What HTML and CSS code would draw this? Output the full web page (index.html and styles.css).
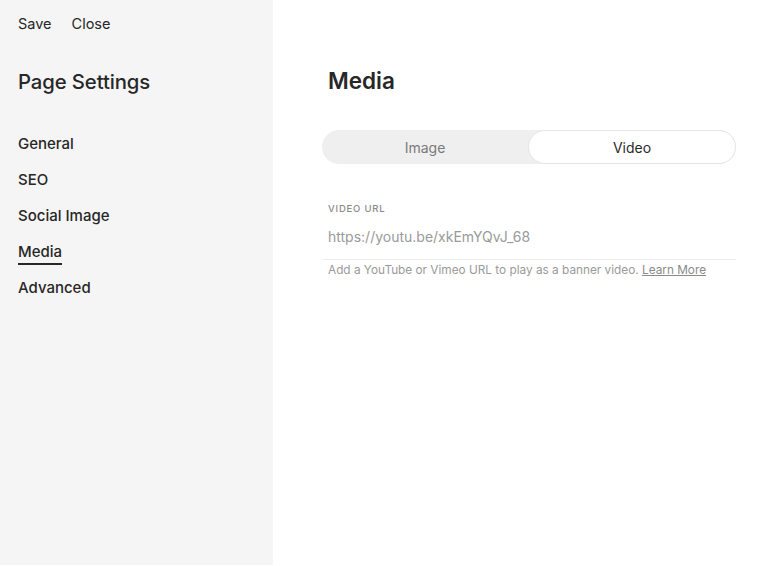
FILE: index.html
```html
<!DOCTYPE html>
<html>
<head>
<meta charset="utf-8">
<link rel="stylesheet" href="styles.css">
</head>
<body>
<div class="app">
  <aside class="sidebar">
    <div class="actions">
      <span class="action">Save</span>
      <span class="action">Close</span>
    </div>
    <h1 class="title">Page Settings</h1>
    <nav class="nav">
      <span class="nav-item">General</span>
      <span class="nav-item">SEO</span>
      <span class="nav-item">Social Image</span>
      <span class="nav-item active">Media</span>
      <span class="nav-item">Advanced</span>
    </nav>
  </aside>
  <main class="main">
    <h2 class="heading">Media</h2>
    <div class="toggle">
      <span class="tab">Image</span>
      <span class="tab selected">Video</span>
    </div>
    <div class="field">
      <div class="label">VIDEO URL</div>
      <div class="input">https://youtu.be/xkEmYQvJ_68</div>
      <div class="help">Add a YouTube or Vimeo URL to play as a banner video. <span class="link">Learn More</span></div>
    </div>
  </main>
</div>
</body>
</html>
```
FILE: styles.css
```css
* { box-sizing: border-box; }
html, body { margin: 0; padding: 0; }
body {
  font-family: Inter, "Noto Sans", sans-serif;
  color: #272727;
  background: #fff;
}
.app {
  display: flex;
  width: 773px;
  height: 566px;
}
.sidebar {
  width: 273px;
  height: 565px;
  background: #f5f5f5;
  padding: 15px 18px 0;
  display: flex;
  flex-direction: column;
}
.actions {
  display: flex;
  gap: 20px;
  font-size: 14.5px;
  line-height: 18px;
}
.title {
  margin: 37px 0 0;
  font-size: 20.3px;
  font-weight: 500;
  line-height: 24px;
  letter-spacing: -0.1px;
}
.nav {
  margin-top: 41px;
  display: flex;
  flex-direction: column;
  align-items: flex-start;
  gap: 18px;
}
.nav-item {
  font-size: 15px;
  font-weight: 500;
  line-height: 18px;
}
.nav-item.active {
  box-shadow: inset 0 -2px 0 #272727;
  height: 22px;
  margin-bottom: -4px;
}
.main {
  flex: 1;
  padding: 68px 37px 0 49px;
}
.heading {
  margin: 0 0 0 6px;
  font-size: 22.5px;
  font-weight: 600;
  line-height: 26px;
}
.toggle {
  margin-top: 36px;
  height: 34px;
  background: #efefef;
  border-radius: 17px;
  display: flex;
}
.tab {
  flex: 1;
  display: flex;
  align-items: center;
  justify-content: center;
  font-size: 14px;
  color: #7a7a7a;
  border-radius: 17px;
}
.tab.selected {
  background: #fff;
  color: #2a2a2a;
  border: 1px solid #e6e6e6;
}
.field {
  margin-top: 39px;
  padding-left: 1px;
}
.label {
  margin-left: 5px;
  font-size: 9.5px;
  font-weight: 500;
  letter-spacing: 0.8px;
  color: #8a8a8a;
  line-height: 12px;
}
.input {
  margin-top: 13px;
  padding: 0 0 13px 5px;
  font-size: 14px;
  line-height: 18px;
  color: #9a9a9a;
  border-bottom: 1px solid #ececec;
}
.help {
  margin-top: 2px;
  margin-left: 5px;
  font-size: 11.8px;
  line-height: 16px;
  color: #9a9a9a;
}
.link {
  color: #8a8a8a;
  text-decoration: underline;
}
```
